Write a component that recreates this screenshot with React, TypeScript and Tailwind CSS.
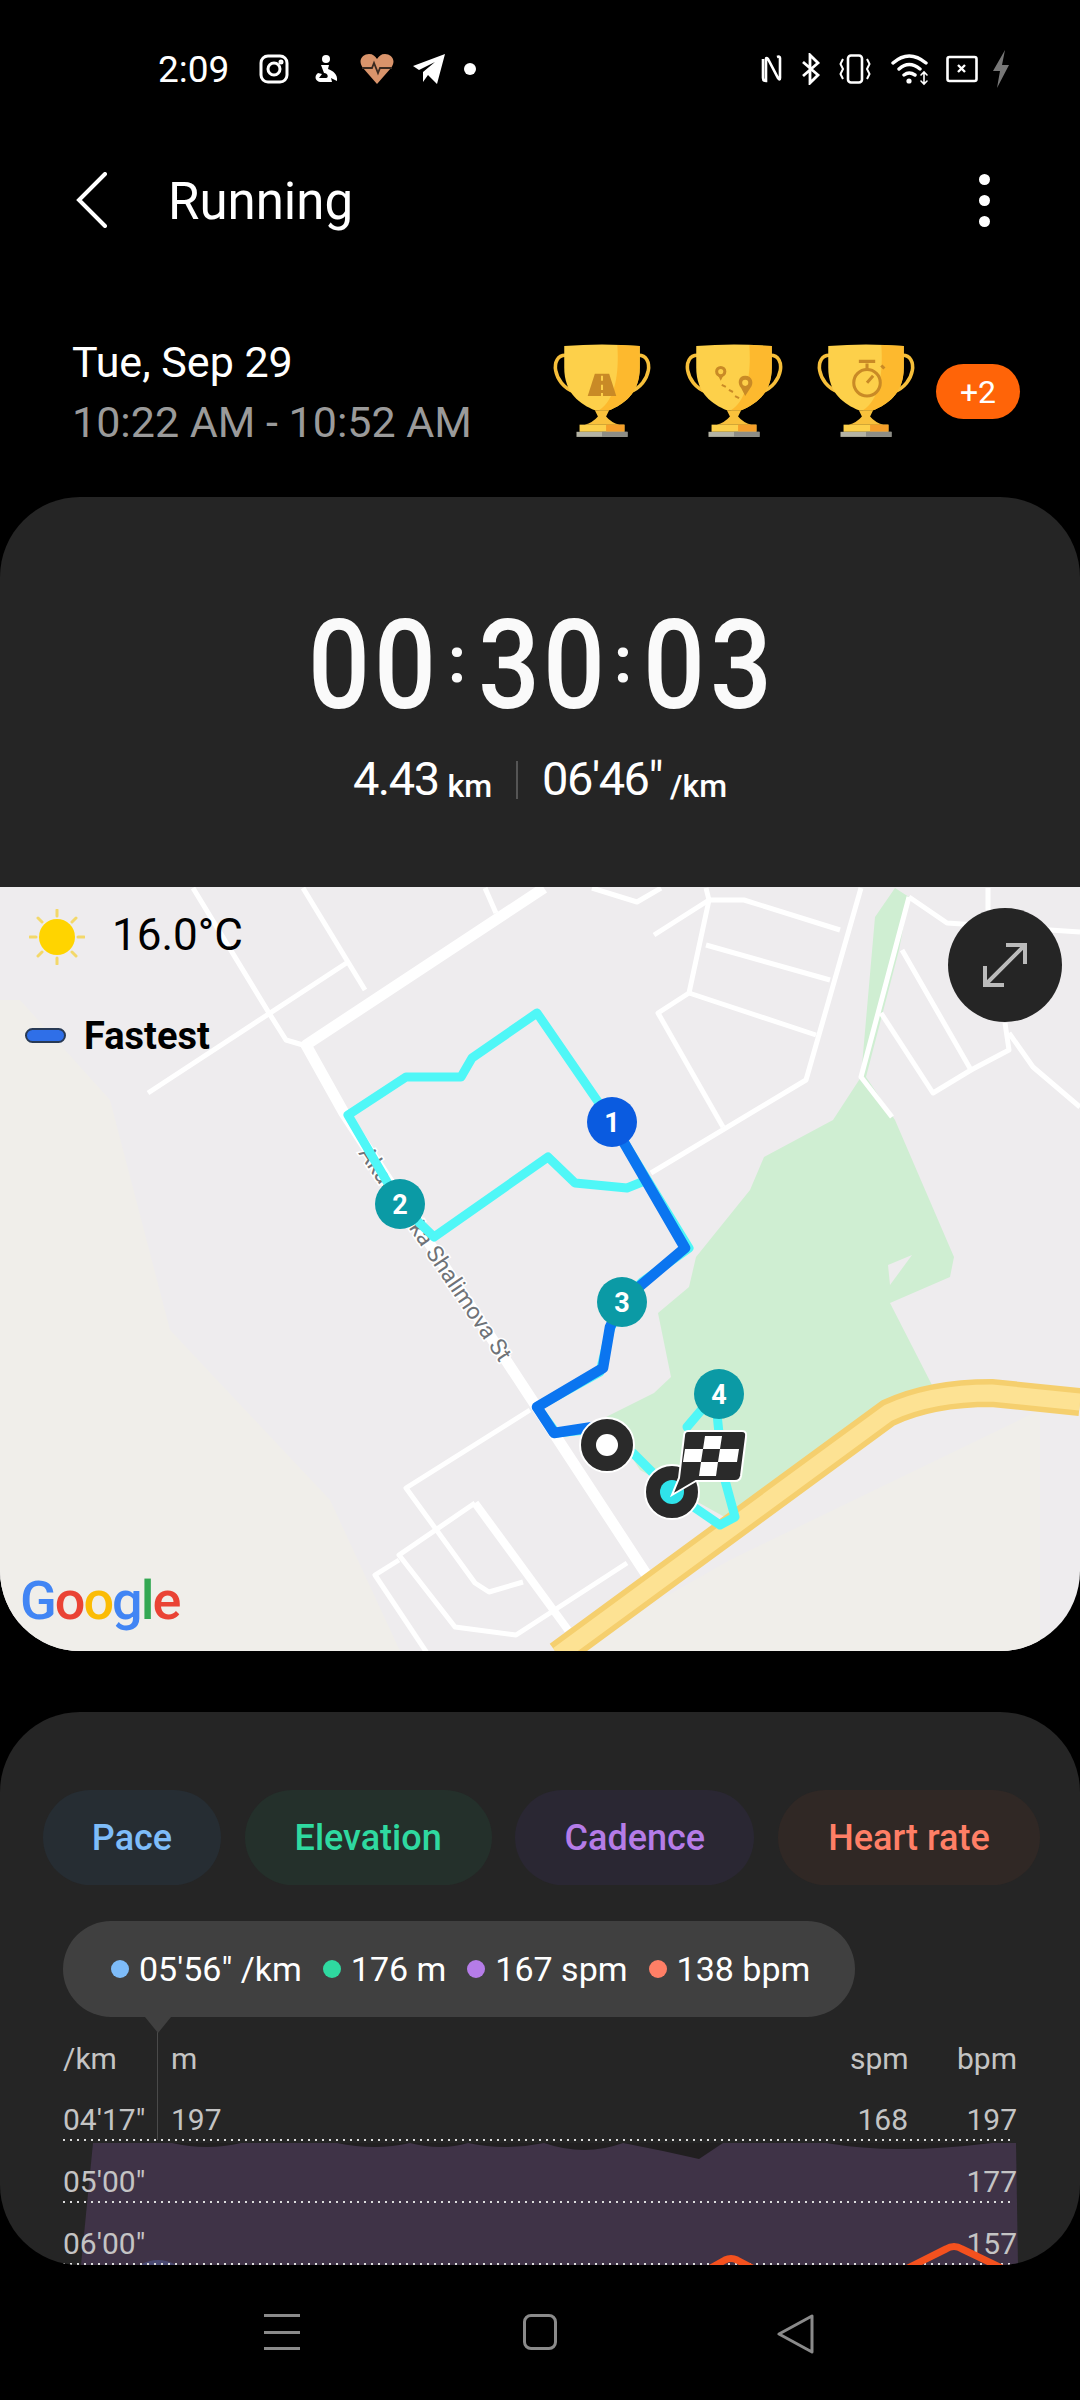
import type { ReactNode } from "react";

const thinRoads = [
  "193,888 269,1013 286,1040 303,1045",
  "303,888 365,990",
  "148,1093 348,962",
  "485,888 496,913",
  "592,888 637,902 661,888",
  "706,888 709,900 654,935",
  "709,900 744,900 840,930",
  "709,900 689,993",
  "706,945 830,980",
  "689,993 816,1035",
  "689,993 658,1013 723,1127",
  "861,888 806,1080 651,1173",
  "909,897 861,1077 892,1117",
  "902,950 971,1070 933,1093 881,1013",
  "971,1070 1009,1050 1005,1023",
  "1009,1033 1033,1067 1080,1107",
  "909,897 947,923 1080,932",
  "988,888 988,910",
  "530,1410 406,1488 475,1583 489,1592 523,1582",
  "475,1503 399,1555 455,1627 516,1635 627,1563",
  "399,1560 375,1575 427,1653",
];

function MapLayer() {
  return (
    <svg viewBox="0 887 1080 764" className="block h-[764px] w-[1080px]">
      <rect x="0" y="887" width="1080" height="764" fill="#eeecee" />
      <path d="M0 1000H20L110 1100L170 1330L330 1500L400 1651H0Z" fill="#f0eeea" />
      <path d="M730 1560L1040 1410V1651H570Z" fill="#f0eeea" />
      <path
        d="M895 888 L909 897 L899 950 L866 1077 L895 1120 L954 1257 L950 1277 L890 1303 L933 1387 L730 1520 L640 1470 L606 1417 L654 1393 L671 1377 L658 1313 L689 1287 L696 1257 L750 1190 L764 1157 L833 1120 L861 1077 L875 917Z"
        fill="#cfeed2"
      />
      <path d="M888 1265L912 1255L890 1285Z" fill="#eeecee" />

      {thinRoads.map((points) => (
        <polyline key={points} points={points} fill="none" stroke="#ffffff" strokeWidth="5" strokeLinejoin="round" />
      ))}
      <polyline points="475,1503 568,1630" fill="none" stroke="#fff" strokeWidth="8" />
      <polyline points="544,888 306,1045 344,1113 650,1580" fill="none" stroke="#fff" strokeWidth="11" strokeLinejoin="round" />

      <path d="M558 1655 L888 1413 Q930 1393 992 1393 L1080 1402" fill="none" stroke="#f5cf6e" strokeWidth="28" />
      <path d="M558 1655 L888 1413 Q930 1393 992 1393 L1080 1402" fill="none" stroke="#fde293" strokeWidth="17" />

      <text
        x="358"
        y="1153"
        transform="rotate(56 358 1153)"
        fontFamily="Roboto, sans-serif"
        fontSize="23"
        fill="#6f7378"
        stroke="#ffffff"
        strokeWidth="3"
        paintOrder="stroke"
      >
        Akademika Shalimova St
      </text>

      <g fill="none" strokeLinejoin="round" strokeLinecap="round">
        <polyline
          points="612,1122 537,1013 472,1058 461,1077 406,1077 348,1115 400,1204 434,1237 548,1157 575,1183 627,1188 647,1180"
          stroke="#4ff7f7"
          strokeWidth="9"
        />
        <polyline points="612,1122 689,1248 642,1282 622,1302 610,1330 600,1372 537,1407 556,1433 606,1428" stroke="#4ff7f7" strokeWidth="9" />
        <polyline
          points="606,1445 633,1453 672,1492 720,1525 735,1517 723,1473 715,1394 687,1427"
          stroke="#4ff7f7"
          strokeWidth="9"
        />
        <polyline points="612,1122 685,1248 640,1286 622,1302 610,1327 603,1368 537,1407 554,1433 606,1425" stroke="#0b75f0" strokeWidth="10.5" />
      </g>

      <circle cx="607" cy="1445" r="27" fill="#2a2a2a" stroke="#fff" strokeWidth="2" />
      <circle cx="607" cy="1445" r="11" fill="#fff" />
      <circle cx="672" cy="1492" r="27" fill="#2a2a2a" stroke="#fff" strokeWidth="2" />
      <circle cx="672" cy="1492" r="12" fill="#2fe3ea" />

      <path
        d="M688 1431 H742 Q747 1431 746 1437 L741 1476 Q740 1481 735 1481 H696 L672 1495 L679 1478 L684 1436 Q684 1431 688 1431Z"
        fill="#2a2a2a"
        stroke="#fff"
        strokeWidth="2"
      />
      <g fill="#fff">
        <path d="M705 1436 H722 L720 1449 H703Z" />
        <path d="M685 1449 H703 L701 1462 H683Z" />
        <path d="M720 1449 H739 L737 1462 H718Z" />
        <path d="M701 1462 H718 L716 1476 H699Z" />
      </g>

      <Marker x={612} y={1122} fill="#0a5be0" label="1" />
      <Marker x={400} y={1204} fill="#0b9aa5" label="2" />
      <Marker x={622} y={1302} fill="#0b9aa5" label="3" />
      <Marker x={719} y={1394} fill="#0b9aa5" label="4" />
    </svg>
  );
}

function Marker({ x, y, fill, label }: { x: number; y: number; fill: string; label: string }) {
  return (
    <g>
      <circle cx={x} cy={y} r="25" fill={fill} />
      <text x={x} y={y + 10} textAnchor="middle" fontFamily="Roboto, sans-serif" fontWeight="700" fontSize="27" fill="#fff">
        {label}
      </text>
    </g>
  );
}

function Trophy({ children }: { children: ReactNode }) {
  return (
    <svg viewBox="0 0 98 96" className="h-[100px] w-[100px]">
      <path d="M13 12C-2 12 0 40 22 48M85 12C100 12 98 40 76 48" fill="none" stroke="#f7bf3a" strokeWidth="3.5" />
      <path d="M12 3Q49 0 86 3V24C86 50 70 60 56 66H42C28 60 12 50 12 24Z" fill="#fdd04a" />
      <path d="M64 2L86 3V24C86 50 70 60 56 66H46C62 56 66 30 64 2Z" fill="#fdb92e" />
      <path d="M42 66H56L53 72Q58 78 66 80H32Q40 78 45 72Z" fill="#f9c13c" />
      <rect x="27" y="80" width="44" height="7" fill="#fdd04a" />
      <rect x="53" y="80" width="18" height="7" fill="#f59f2a" />
      <rect x="24" y="87" width="50" height="5" fill="#b4b3a4" />
      <rect x="49" y="87" width="25" height="5" fill="#8d8d86" />
      {children}
    </svg>
  );
}

function Segment({ children, className }: { children: ReactNode; className: string }) {
  return <span className={`flex justify-center ${className}`}>{children}</span>;
}

function StatusIcons() {
  return (
    <div className="flex items-center">
      <svg viewBox="0 0 30 30" className="ml-[30px] h-[30px] w-[30px]" fill="none" stroke="#fff" strokeWidth="3">
        <rect x="2" y="2" width="26" height="26" rx="7" />
        <circle cx="15" cy="15" r="6" />
        <circle cx="22" cy="8" r="1" fill="#fff" />
      </svg>
      <svg viewBox="0 0 26 30" className="ml-[24px] h-[30px] w-[26px]" fill="#fff">
        <circle cx="13" cy="5" r="4" />
        <path d="M8 11H16L15 15C20 17 25 20 24 27L18 24L19 28H7C2 27 1 22 5 19L9 20L6 24H13C16 24 15 19 11 19Z" />
      </svg>
      <svg viewBox="0 0 34 30" className="ml-[21px] h-[30px] w-[34px]">
        <path d="M17 30L3 14C-3 6 3 0 9 0C13 0 15 2 17 5C19 2 21 0 25 0C31 0 37 6 31 14Z" fill="#d9946b" />
        <path d="M2 14H12L14 9L18 19L20 14H32" fill="none" stroke="#3a2a20" strokeWidth="1.8" />
      </svg>
      <svg viewBox="0 0 32 30" className="ml-[19px] h-[30px] w-[32px]" fill="#fff">
        <path d="M32 0L24 30L15 21L10 28L10 18L22 8L6 16L0 12Z" />
      </svg>
      <span className="ml-[19px] h-[12px] w-[12px] rounded-full bg-white" />
    </div>
  );
}

function SystemIcons() {
  return (
    <div className="flex items-center">
      <svg viewBox="0 0 22 30" className="h-[30px] w-[22px]" fill="none" stroke="#fff" strokeWidth="2.6">
        <path d="M2 5V24Q2 27 5 27L5 5Q5 3 7 5L17 24Q19 27 19 24V4M19 4Q19 2 16 3" />
      </svg>
      <svg viewBox="0 0 22 32" className="ml-[17px] h-[32px] w-[22px]" fill="none" stroke="#fff" strokeWidth="2.8">
        <path d="M3 9L18 22L10 30V2L18 10L3 23" />
      </svg>
      <svg viewBox="0 0 32 30" className="ml-[17px] h-[30px] w-[32px]" fill="none" stroke="#fff" strokeWidth="2.6">
        <rect x="9" y="1.5" width="14" height="27" rx="3" />
        <path d="M4 5L1.5 10L4 15L1.5 20L4 25M28 5L30.5 10L28 15L30.5 20L28 25" strokeWidth="2" />
      </svg>
      <svg viewBox="0 0 40 34" className="ml-[20px] h-[34px] w-[40px]" fill="none" stroke="#fff" strokeWidth="3.4" strokeLinecap="round">
        <path d="M2 11Q18 -3 35 11M8 17Q18 8 29 17M13 23Q18 19 24 23" />
        <circle cx="18" cy="29" r="2.6" fill="#fff" stroke="none" />
        <path d="M33 21V31M30 23L33 20L36 23M30 29L33 32L36 29" strokeWidth="1.6" />
      </svg>
      <svg viewBox="0 0 32 30" className="ml-[15px] h-[30px] w-[32px]" fill="none" stroke="#fff" strokeWidth="2.6">
        <rect x="1.5" y="3" width="29" height="24" rx="2" />
        <path d="M12 11L19 18M19 11L12 18" strokeWidth="2.4" />
      </svg>
      <svg viewBox="0 0 20 38" className="ml-[12px] h-[38px] w-[22px]" fill="#777">
        <path d="M14 0L2 21H9L6 38L18 15H11Z" />
      </svg>
    </div>
  );
}

function ChartArea() {
  return (
    <svg viewBox="0 2112 1080 153" className="absolute left-0 top-[400px] h-[153px] w-[1080px]">
      <path d="M93 2143H1016L1018 2265H81Z" fill="#3f3347" />
      <path
        d="M172 2143Q207 2151 241 2143ZM337 2143Q375 2151 410 2143Q441 2151 468 2143Q506 2151 544 2143Q585 2157 623 2143Q660 2150 699 2159L723 2143ZM826 2143Q895 2155 992 2143Z"
        fill="#211f20"
      />
      <path d="M140 2265Q158 2255 176 2265Z" fill="#4a4a72" />
      {[2140, 2202, 2264].map((y) => (
        <line key={y} x1="63" x2="1012" y1={y} y2={y} stroke="#dddddd" strokeWidth="2" strokeDasharray="2 5" />
      ))}
    </svg>
  );
}

function HeartLine() {
  return (
    <svg viewBox="0 2112 1080 153" className="pointer-events-none absolute left-0 top-[400px] h-[153px] w-[1080px]">
      <path
        d="M709 2269L725 2260Q731 2257 737 2260L754 2269M906 2269L946 2249Q954 2244 962 2249L1012 2273"
        fill="none"
        stroke="#f4511e"
        strokeWidth="7"
        strokeLinejoin="round"
      />
    </svg>
  );
}

const legend = [
  { dot: "bg-[#7ebcf9]", text: "05'56\" /km" },
  { dot: "bg-[#2fd9a0]", text: "176 m" },
  { dot: "bg-[#b57ce8]", text: "167 spm" },
  { dot: "bg-[#ff7f66]", text: "138 bpm" },
];

const rows = [
  { pace: "04'17\"", elevation: "197", cadence: "168", heart: "197" },
  { pace: "05'00\"", elevation: "", cadence: "", heart: "177" },
  { pace: "06'00\"", elevation: "", cadence: "", heart: "157" },
];

export default function App() {
  return (
    <div className="flex h-[2400px] w-[1080px] flex-col overflow-hidden bg-black text-white [font-family:Roboto,sans-serif]">
      {/* status bar */}
      <div className="flex h-[138px] shrink-0 items-center justify-between pl-[158px] pr-[68px]">
        <div className="flex items-center">
          <span className="text-[37px] leading-none">2:09</span>
          <StatusIcons />
        </div>
        <SystemIcons />
      </div>

      {/* header */}
      <div className="flex h-[124px] shrink-0 items-center pl-[76px] pr-[90px]">
        <svg viewBox="0 0 32 56" className="h-[56px] w-[32px]" fill="none" stroke="#fff" strokeWidth="4" strokeLinecap="round">
          <path d="M29 2L3 28L29 54" />
        </svg>
        <h1 className="ml-[60px] mt-[2px] text-[51px] font-normal leading-none">Running</h1>
        <div className="ml-auto flex flex-col gap-[10px]">
          <span className="h-[11px] w-[11px] rounded-full bg-white" />
          <span className="h-[11px] w-[11px] rounded-full bg-white" />
          <span className="h-[11px] w-[11px] rounded-full bg-white" />
        </div>
      </div>

      {/* date + trophies */}
      <div className="flex h-[235px] shrink-0 items-center pl-[72px] pr-[60px] pt-[24px]">
        <div className="flex flex-col gap-[14px]">
          <span className="text-[43px] leading-[46px]">Tue, Sep 29</span>
          <span className="text-[43px] leading-[46px] text-[#9a9a9a]">10:22 AM - 10:52 AM</span>
        </div>
        <div className="ml-auto flex items-center">
          <div className="flex items-center gap-[32px]">
            <Trophy>
              <path d="M42 30H56L63 52H35Z" fill="#c98a26" />
              <path d="M49 32V37M49 41V46M49 49V52" stroke="#fdd04a" strokeWidth="2" />
            </Trophy>
            <Trophy>
              <circle cx="36" cy="28" r="4" fill="none" stroke="#c98a26" strokeWidth="3" />
              <path d="M33 31L36 37L39 31Z" fill="#c98a26" />
              <path d="M60 32C53 32 52 40 56 44L60 52L65 44C69 40 67 32 60 32Z" fill="#c98a26" />
              <circle cx="60" cy="39" r="3" fill="#fdd04a" />
              <path d="M37 41L41 43M44 46L48 48M50 52L54 54" stroke="#c98a26" strokeWidth="2" />
            </Trophy>
            <Trophy>
              <circle cx="50" cy="39" r="13" fill="none" stroke="#c98a26" strokeWidth="3" />
              <path d="M42 18H58M50 20V26M50 39L56 32M64 22L67 25" stroke="#c98a26" strokeWidth="3" />
            </Trophy>
          </div>
          <span className="ml-[20px] flex h-[55px] w-[84px] items-center justify-center rounded-full bg-[#ff6408] text-[32px]">+2</span>
        </div>
      </div>

      {/* workout summary */}
      <div className="flex h-[390px] shrink-0 flex-col items-center rounded-t-[80px] bg-[#252525] pt-[113px]">
        <div className="flex h-[112px] items-center text-[124px] font-medium leading-none text-[#fafafa]">
          <Segment className="w-[66px] scale-x-[.88]">0</Segment>
          <Segment className="w-[66px] scale-x-[.88]">0</Segment>
          <Segment className="w-[38px] -translate-y-[5px] text-[64px] font-bold">:</Segment>
          <Segment className="w-[66px] scale-x-[.88]">3</Segment>
          <Segment className="w-[64px] scale-x-[.88]">0</Segment>
          <Segment className="w-[34px] -translate-y-[5px] text-[64px] font-bold">:</Segment>
          <Segment className="w-[68px] scale-x-[.88]">0</Segment>
          <Segment className="w-[66px] scale-x-[.88]">3</Segment>
        </div>
        <div className="mt-[33px] flex items-end leading-none">
          <span className="text-[47px] tracking-[-1.5px]">4.43</span>
          <span className="ml-[9px] text-[32px] font-medium">km</span>
          <span className="mx-[24px] mb-[3px] h-[38px] w-[2px] bg-[#555]" />
          <span className="text-[47px] tracking-[-1.5px]">06'46"</span>
          <span className="ml-[8px] text-[32px] font-medium">/km</span>
        </div>
      </div>

      {/* map */}
      <div className="relative h-[764px] shrink-0 overflow-hidden rounded-b-[80px]">
        <MapLayer />
        <svg viewBox="0 0 56 56" className="absolute left-[29px] top-[22px] h-[56px] w-[56px]">
          <g stroke="#f3d86a" strokeWidth="3" strokeLinecap="round">
            <path d="M28 1V7M28 49V55M1 28H7M49 28H55M9 9L13 13M43 43L47 47M9 47L13 43M43 13L47 9" />
          </g>
          <circle cx="28" cy="28" r="18" fill="#ffd400" />
        </svg>
        <span className="absolute left-[112px] top-[22px] text-[44px] leading-[52px] text-black">16.0°C</span>
        <span className="absolute left-[25px] top-[141px] h-[15px] w-[41px] rounded-full border-2 border-[#283a55] bg-[#2f6fe8]" />
        <span className="absolute left-[84px] top-[126px] text-[38px] font-bold leading-[46px] text-black">Fastest</span>
        <div className="absolute left-[948px] top-[21px] flex h-[114px] w-[114px] items-center justify-center rounded-full bg-[#252525]">
          <svg viewBox="0 0 48 48" className="h-[48px] w-[48px]" fill="none" stroke="#bbbbbb" strokeWidth="4">
            <path d="M5 43L43 5M25 4H44V23M4 25V44H23" />
          </svg>
        </div>
        <span className="absolute left-[20px] top-[682px] text-[54px] font-medium leading-[64px] tracking-[-2px]">
          <span className="text-[#4285f4]">G</span>
          <span className="text-[#ea4335]">o</span>
          <span className="text-[#fbbc05]">o</span>
          <span className="text-[#4285f4]">g</span>
          <span className="text-[#34a853]">l</span>
          <span className="text-[#ea4335]">e</span>
        </span>
      </div>

      {/* charts card */}
      <div className="relative mt-[61px] h-[553px] shrink-0 overflow-hidden rounded-[80px] bg-[#252525]">
        <div className="flex justify-between pl-[43px] pr-[40px] pt-[78px] text-[36px] font-medium leading-none">
          <span className="flex h-[95px] w-[178px] items-center justify-center rounded-full bg-[#262d33] text-[#7ebcf9]">Pace</span>
          <span className="flex h-[95px] w-[247px] items-center justify-center rounded-full bg-[#24302b] text-[#2fd9a0]">Elevation</span>
          <span className="flex h-[95px] w-[239px] items-center justify-center rounded-full bg-[#2a2733] text-[#b57ce8]">Cadence</span>
          <span className="flex h-[95px] w-[262px] items-center justify-center rounded-full bg-[#302825] text-[#ff7f66]">Heart rate</span>
        </div>

        <div className="relative z-10 ml-[63px] mt-[36px] flex h-[96px] w-[792px] items-center gap-[21px] rounded-[48px] bg-[#404040] pl-[48px]">
          {legend.map((item) => (
            <span key={item.text} className="flex items-center gap-[10px] text-[34px] leading-none">
              <span className={`h-[18px] w-[18px] rounded-full ${item.dot}`} />
              {item.text}
            </span>
          ))}
          <span className="absolute left-[82px] top-[96px] h-0 w-0 border-x-[13px] border-t-[16px] border-x-transparent border-t-[#404040]" />
        </div>

        <ChartArea />
        <span className="absolute left-[157px] top-[320px] h-[108px] w-[1px] bg-[#4a4a4a]" />

        <div className="relative mt-[12px] px-[63px] text-[30px] leading-none text-[#c4c4c4]">
          <div className="flex h-[60px] items-center">
            <span className="w-[108px]">/km</span>
            <span className="flex-1">m</span>
            <span className="w-[58px] text-right">spm</span>
            <span className="w-[109px] text-right">bpm</span>
          </div>
          {rows.map((row) => (
            <div key={row.pace} className="flex h-[62px] items-center">
              <span className="w-[108px]">{row.pace}</span>
              <span className="flex-1">{row.elevation}</span>
              <span className="w-[58px] text-right">{row.cadence}</span>
              <span className="w-[109px] text-right">{row.heart}</span>
            </div>
          ))}
        </div>
        <HeartLine />
      </div>

      {/* nav bar */}
      <div className="flex flex-1 items-start pt-[49px]">
        <div className="ml-[264px] flex h-[36px] w-[36px] flex-col justify-between">
          <span className="h-[3px] bg-[#8a8a8a]" />
          <span className="h-[3px] bg-[#8a8a8a]" />
          <span className="h-[3px] bg-[#8a8a8a]" />
        </div>
        <span className="ml-[223px] h-[36px] w-[34px] rounded-[8px] border-[3px] border-[#8a8a8a]" />
        <svg viewBox="0 0 38 40" className="ml-[220px] h-[40px] w-[38px]" fill="none" stroke="#8a8a8a" strokeWidth="3" strokeLinejoin="round">
          <path d="M2 20L35 2V38Z" />
        </svg>
      </div>
    </div>
  );
}
